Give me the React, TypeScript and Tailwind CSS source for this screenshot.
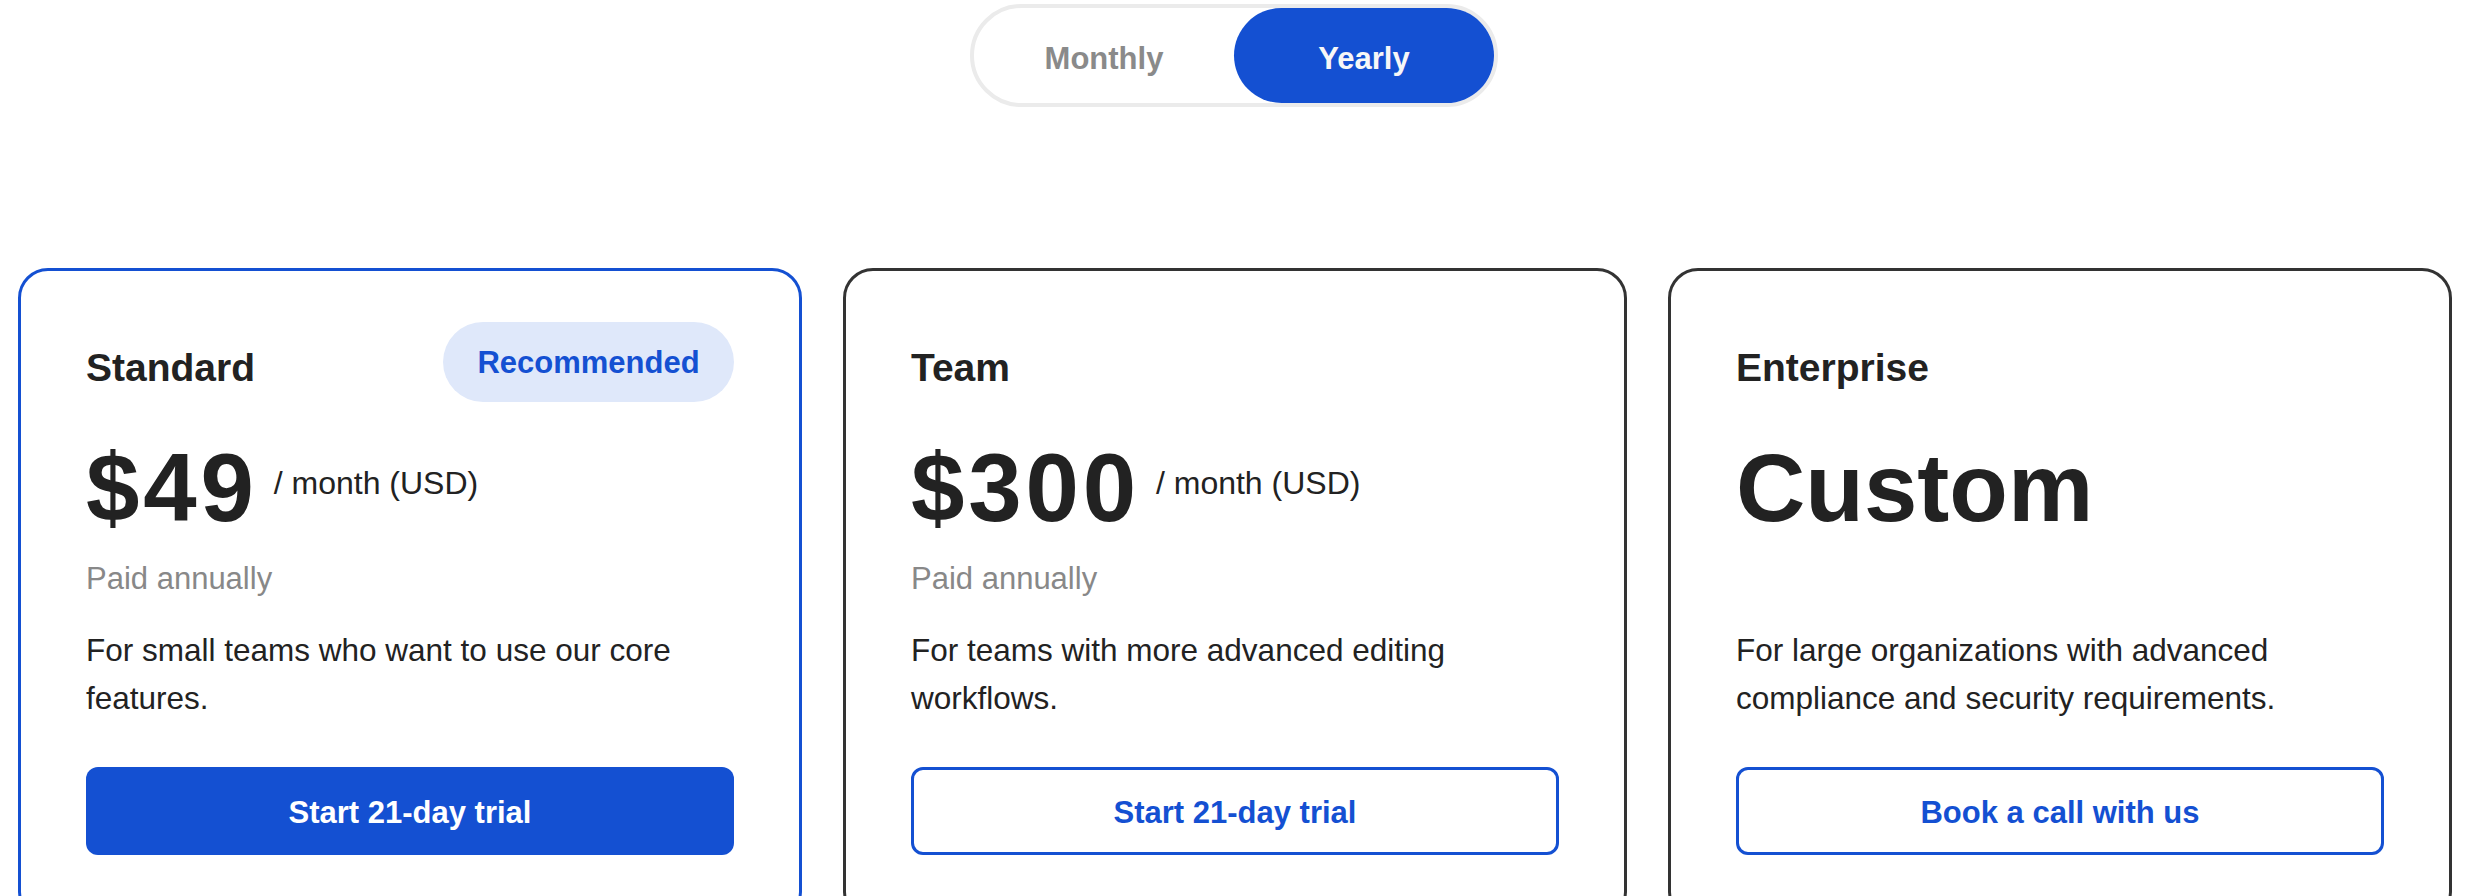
import React, { useState } from 'react';

type Plan = {
  id: string;
  name: string;
  price: string;
  unit?: string;
  note?: string;
  description: string[];
  cta: string;
  featured?: boolean;
};

const plans: Plan[] = [
  {
    id: 'standard',
    name: 'Standard',
    price: '$49',
    unit: '/ month (USD)',
    note: 'Paid annually',
    description: ['For small teams who want to use our core', 'features.'],
    cta: 'Start 21-day trial',
    featured: true,
  },
  {
    id: 'team',
    name: 'Team',
    price: '$300',
    unit: '/ month (USD)',
    note: 'Paid annually',
    description: ['For teams with more advanced editing', 'workflows.'],
    cta: 'Start 21-day trial',
  },
  {
    id: 'enterprise',
    name: 'Enterprise',
    price: 'Custom',
    description: ['For large organizations with advanced', 'compliance and security requirements.'],
    cta: 'Book a call with us',
  },
];

const PlanCard = ({ plan }: { plan: Plan }) => (
  <div
    className={
      plan.featured
        ? 'rounded-[30px] border-[3px] border-[#1450d2] px-[65px] pt-[51px] pb-[64px]'
        : 'rounded-[30px] border-[3px] border-[#333333] px-[65px] pt-[51px] pb-[64px]'
    }
  >
    <div className="flex h-[80px] items-center justify-between">
      <h3 className="mt-[10px] text-[39px] leading-none font-bold text-[#222222]">{plan.name}</h3>
      {plan.featured && (
        <span className="flex h-[80px] w-[291px] items-center justify-center rounded-full bg-[#dfe8fa] text-[31px] leading-none font-bold text-[#1450d2]">
          Recommended
        </span>
      )}
    </div>

    <div className="mt-[38px] flex items-start">
      {plan.unit ? (
        <span className="text-[96px] leading-none font-bold tracking-[0.04em] text-[#222222]">{plan.price}</span>
      ) : (
        <span className="text-[96px] leading-none font-bold text-[#222222]">{plan.price}</span>
      )}
      {plan.unit && (
        <span className="mt-[27px] ml-[16px] text-[32px] leading-none text-[#222222]">{plan.unit}</span>
      )}
    </div>

    <p className="mt-[27px] h-[31px] text-[31px] leading-none text-[#888888]">{plan.note}</p>

    <p className="mt-[32px] text-[31.5px] leading-[48px] text-[#222222]">
      {plan.description[0]}
      <br />
      {plan.description[1]}
    </p>

    <button
      className={
        plan.featured
          ? 'mt-[45px] flex h-[88px] w-full items-center justify-center rounded-[12px] bg-[#1450d2] pt-[4px] text-[31px] font-bold text-white'
          : 'mt-[45px] flex h-[88px] w-full items-center justify-center rounded-[12px] border-[3px] border-[#1450d2] bg-white pt-[4px] text-[31px] font-bold text-[#1450d2]'
      }
    >
      {plan.cta}
    </button>
  </div>
);

export default function App() {
  const [billing, setBilling] = useState<'monthly' | 'yearly'>('yearly');

  return (
    <div className="min-h-screen bg-white font-['Liberation_Sans',Arial,sans-serif]">
      <div className="flex justify-center pt-[4px] pr-[4px]">
        <div className="flex rounded-full border-4 border-[#ebebeb] bg-white">
          <button
            onClick={() => setBilling('monthly')}
            className={
              billing === 'monthly'
                ? 'h-[95px] w-[260px] rounded-full bg-[#1450d2] pt-[8px] text-[31px] font-bold text-[#f7f7f7]'
                : 'h-[95px] w-[260px] rounded-full pt-[8px] text-[31px] font-bold text-[#8a8a8a]'
            }
          >
            Monthly
          </button>
          <button
            onClick={() => setBilling('yearly')}
            className={
              billing === 'yearly'
                ? 'h-[95px] w-[260px] rounded-full bg-[#1450d2] pt-[8px] text-[31px] font-bold text-[#f7f7f7]'
                : 'h-[95px] w-[260px] rounded-full pt-[8px] text-[31px] font-bold text-[#8a8a8a]'
            }
          >
            Yearly
          </button>
        </div>
      </div>

      <div className="mt-[161px] grid grid-cols-3 gap-[41px] pr-[20px] pl-[18px]">
        {plans.map(plan => (
          <PlanCard key={plan.id} plan={plan} />
        ))}
      </div>
    </div>
  );
}
